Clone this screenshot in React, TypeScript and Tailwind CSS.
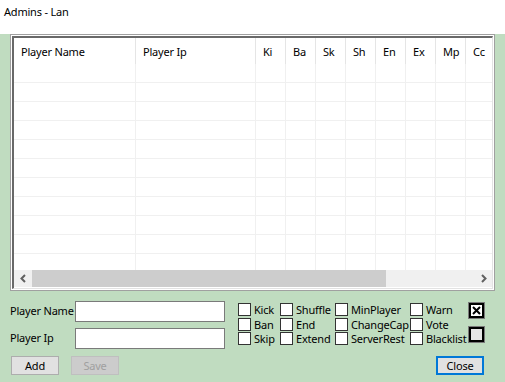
import React from "react";

const font = { fontFamily: '"Noto Sans", "Liberation Sans", sans-serif' };

const columns = [
  { name: "Player Name", w: "w-[122px]" },
  { name: "Player Ip", w: "w-[120px]" },
  { name: "Ki", w: "w-[30px]" },
  { name: "Ba", w: "w-[30px]" },
  { name: "Sk", w: "w-[30px]" },
  { name: "Sh", w: "w-[30px]" },
  { name: "En", w: "w-[30px]" },
  { name: "Ex", w: "w-[30px]" },
  { name: "Mp", w: "w-[30px]" },
  { name: "Cc", w: "w-[40px]" },
];

const checkCols = [
  { w: "w-[42px]", items: ["Kick", "Ban", "Skip"] },
  { w: "w-[55px]", items: ["Shuffle", "End", "Extend"] },
  { w: "w-[75px]", items: ["MinPlayer", "ChangeCap", "ServerRest"] },
  { w: "w-[58px]", items: ["Warn", "Vote", "Blacklist"] },
];

const rowHeights = ["h-[15px]", "h-[14px]", "h-[14px]"];

function Check({ label, h }: { label: string; h: string }) {
  return (
    <div className={`flex items-start ${h}`}>
      <div className="h-[13px] w-[13px] shrink-0 border border-[#333333] bg-white" />
      <span className="ml-[3px] -mt-[1px] whitespace-nowrap leading-[15px]">{label}</span>
    </div>
  );
}

function Listview() {
  return (
    <div className="ml-[10px] mt-[9px] h-[257px] w-[485px] border border-[#a0a0a0] bg-white p-px">
      <div className="flex h-full w-full flex-col overflow-hidden border-b border-l-2 border-r border-t-2 border-b-[#e3e3e3] border-l-[#696969] border-r-[#e3e3e3] border-t-[#696969] bg-white">
        <div className="flex h-[26px] shrink-0">
          {columns.map((c) => (
            <div
              key={c.name}
              className={`${c.w} shrink-0 border-r border-[#e5e5e5] pl-[7px] pt-[6px] leading-[15px] whitespace-nowrap`}
            >
              {c.name}
            </div>
          ))}
        </div>
        <div className="h-[206px] shrink-0 overflow-hidden">
          {Array.from({ length: 11 }).map((_, i) => (
            <div key={i} className="flex h-[19px] border-b border-[#f0f0f0]">
              {columns.map((c) => (
                <div key={c.name} className={`${c.w} shrink-0 border-r border-[#f0f0f0]`} />
              ))}
            </div>
          ))}
        </div>
        <div className="flex h-[17px] shrink-0 items-center bg-[#f0f0f0]">
          <div className="flex h-full w-[17px] items-center justify-center">
            <svg width="8" height="9" viewBox="0 0 8 9">
              <polyline points="6,1 2.5,4.5 6,8" fill="none" stroke="#606060" strokeWidth="2" />
            </svg>
          </div>
          <div className="ml-px h-full w-[354px] bg-[#cdcdcd]" />
          <div className="flex-1" />
          <div className="flex h-full w-[17px] items-center justify-center">
            <svg width="8" height="9" viewBox="0 0 8 9">
              <polyline points="2,1 5.5,4.5 2,8" fill="none" stroke="#606060" strokeWidth="2" />
            </svg>
          </div>
        </div>
      </div>
    </div>
  );
}

export default function App() {
  return (
    <div className="h-[382px] w-[505px] text-[11px] tracking-[-0.2px] text-black" style={font}>
      <div className="flex h-[25px] items-center bg-white pl-[4px]">Admins - Lan</div>
      <div className="h-[357px] bg-[#c0dcc0]">
        <Listview />

        <div className="mt-[10px] flex h-[48px]">
          <div className="ml-[10px] flex w-[215px] flex-col gap-[6px]">
            <div className="flex h-[21px] items-center">
              <span className="w-[65px] whitespace-nowrap">Player Name</span>
              <div className="h-[21px] w-[150px] border border-[#7a7a7a] bg-white" />
            </div>
            <div className="flex h-[21px] items-center">
              <span className="w-[65px] whitespace-nowrap">Player Ip</span>
              <div className="h-[21px] w-[150px] border border-[#7a7a7a] bg-white" />
            </div>
          </div>

          <div className="ml-[13px] mt-[2px] flex">
            {checkCols.map((col, ci) => (
              <div key={ci} className={`${col.w} flex flex-col`}>
                {col.items.map((it, i) => (
                  <Check key={it} label={it} h={rowHeights[i]} />
                ))}
              </div>
            ))}
          </div>

          <div className="mt-[1px] flex flex-col gap-[7px]">
            <div className="flex h-[17px] w-[17px] items-center justify-center border border-[#7a7a7a] bg-white">
              <div className="flex h-full w-full items-center justify-center border-2 border-black bg-white">
                <svg width="9" height="9" viewBox="0 0 9 9">
                  <path d="M1 1 L8 8 M8 1 L1 8" stroke="black" strokeWidth="2" />
                </svg>
              </div>
            </div>
            <div className="h-[17px] w-[17px] border border-[#7a7a7a]">
              <div className="h-full w-full border-2 border-black bg-[#e6e6e6]" />
            </div>
          </div>
        </div>

        <div className="mt-[7px] flex h-[19px] items-center">
          <button className="ml-[11px] h-[19px] w-[48px] border border-[#adadad] bg-[#e1e1e1] leading-none">
            Add
          </button>
          <button className="ml-[12px] h-[19px] w-[48px] border border-[#bfbfbf] bg-[#cccccc] leading-none text-[#a0a0a0]">
            Save
          </button>
          <div className="flex-1" />
          <button className="mr-[21px] h-[19px] w-[48px] border-2 border-[#0078d7] bg-[#e1e1e1] leading-none">
            Close
          </button>
        </div>
      </div>
    </div>
  );
}
